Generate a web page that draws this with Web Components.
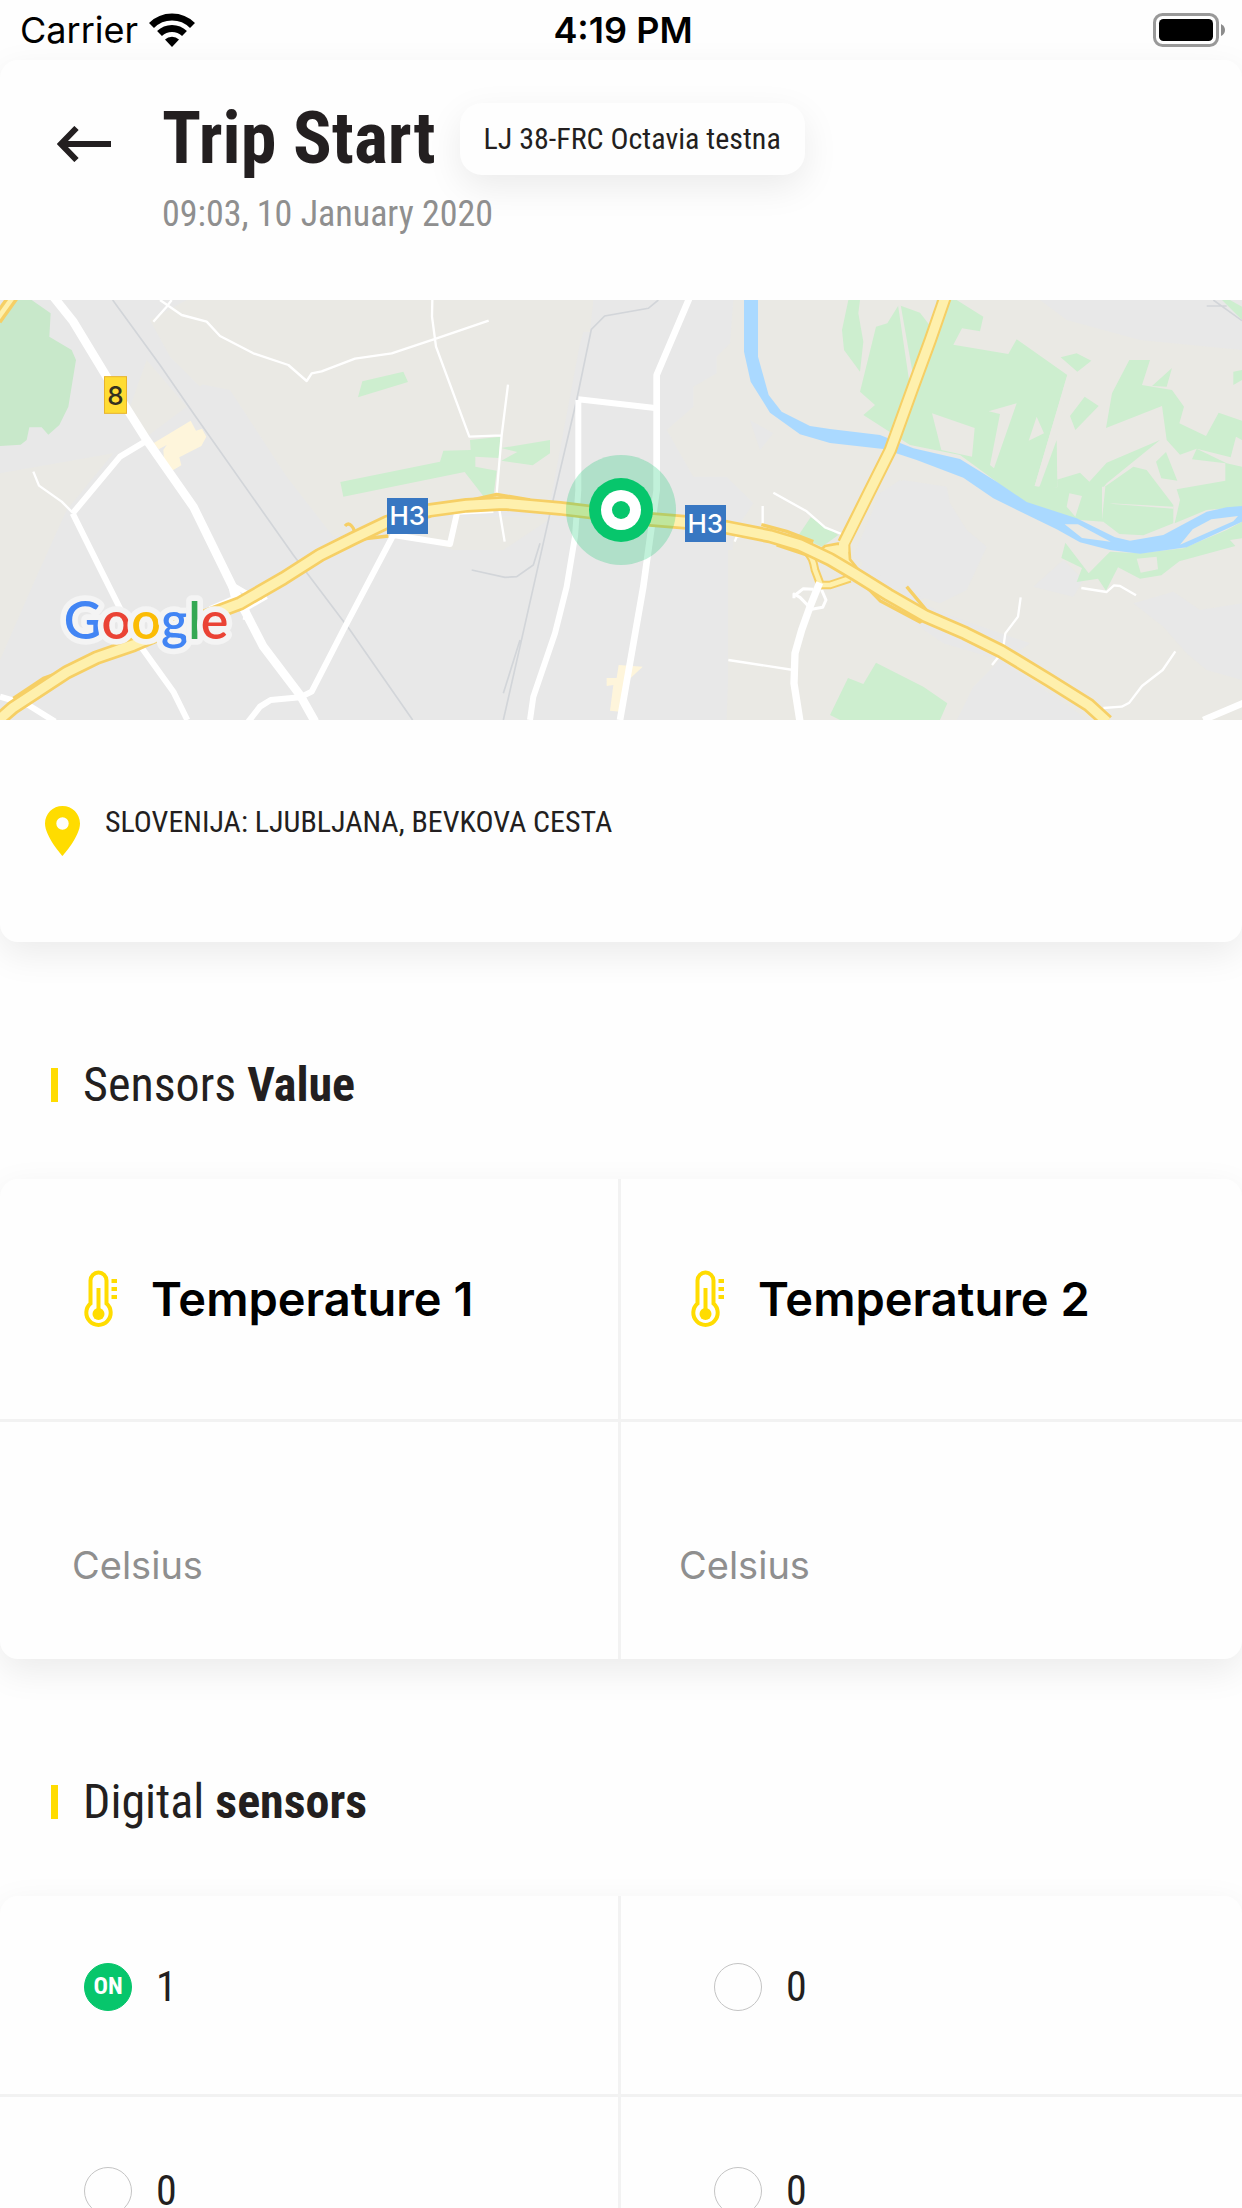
<!DOCTYPE html>
<html lang="en">
<head>
<meta charset="utf-8">
<meta name="viewport" content="width=device-width, initial-scale=1">
<title>Trip Start</title>
<style>
  html, body { margin: 0; background: #fefefe; }
  body {
    --ink: #231f20;
    --muted: #8f8f8f;
    --accent: #ffdc00;
    --ok: #07c66c;
    --line: #f2f2f2;
    --surface: #fefefe;
    --shadow: 0 12px 36px rgba(0, 0, 0, .08);
    --condensed: "Roboto Condensed", "Liberation Sans Narrow", Roboto, sans-serif;
    --system: Inter, "Liberation Sans", sans-serif;
    color: var(--ink);
    font-family: var(--condensed);
    height: 100vh;
    overflow: hidden auto;
    scrollbar-width: none;
  }
</style>
</head>
<body>
<trip-page></trip-page>

<script>
const define = (name, html) => {
  const template = document.createElement('template');
  template.innerHTML = html;
  customElements.define(name, class extends HTMLElement {
    constructor() {
      super();
      this.attachShadow({ mode: 'open' }).append(template.content.cloneNode(true));
    }
  });
};

define('status-bar', `
  <style>
    :host { display: grid; grid-template-columns: 1fr auto 1fr; align-items: center; height: 60px; padding: 0 16px 0 20px; color: #000; font: 400 36px/60px var(--system); }
    .left { display: flex; align-items: center; gap: 11px; }
    .time { font-weight: 600; }
    .battery { justify-self: end; }
    svg { display: block; }
  </style>
  <div class="left"><span>Carrier</span>
    <svg width="46" height="34" viewBox="0 0 46 34" aria-hidden="true">
      <path fill="none" stroke="#000" stroke-width="7" d="M2.5 12.5a29 29 0 0 1 41 0"/>
      <path fill="none" stroke="#000" stroke-width="7" d="M10.5 20.5a18 18 0 0 1 25 0"/>
      <path d="M23 34l-7-7.500a10 10 0 0 1 14 0z"/>
    </svg>
  </div>
  <span class="time">4:19 PM</span>
  <svg class="battery" width="74" height="34" viewBox="0 0 74 34" aria-hidden="true">
    <rect x="2.500" y="1.500" width="63" height="31" rx="8" fill="none" stroke="#999" stroke-width="3"/>
    <rect x="7" y="6" width="54" height="22" rx="4.500"/>
    <path d="M69 11q4 2 4 6t-4 6z" fill="#8c8c8c"/>
  </svg>`);

define('trip-header', `
  <style>
    :host { display: grid; grid-template-columns: 162px 1fr; padding: 37px 0 65px; }
    button { all: unset; align-self: start; padding: 29px 0 0 57px; cursor: pointer; }
    svg { display: block; }
    .row { display: flex; align-items: center; gap: 24px; height: 84px; }
    h1 { margin: 0; font-size: 72px; line-height: 84px; font-weight: 700; white-space: nowrap; }
    .tag { padding: 0 24px; border-radius: 22px; background: var(--surface); box-shadow: var(--shadow); font-size: 30px; line-height: 72px; white-space: nowrap; }
    p { margin: 12px 0 0; font-size: 36px; line-height: 42px; color: var(--muted); }
  </style>
  <button aria-label="Back">
    <svg width="55" height="36" viewBox="0 0 55 36" aria-hidden="true"><path fill="none" stroke="#231f20" stroke-width="6" d="M54 18H5M19.500 2L4 18l15.500 16"/></svg>
  </button>
  <div>
    <div class="row"><h1><slot name="title"></slot></h1><span class="tag"><slot name="vehicle"></slot></span></div>
    <p><slot name="time"></slot></p>
  </div>`);

define('trip-map', `
  <style>
    :host { display: block; height: 420px; overflow: hidden; }
    svg { display: block; width: 100%; height: 100%; }
    .w { fill: none; stroke: #fff; stroke-linejoin: round; }
    .rail { fill: none; stroke: #d2d5d9; stroke-width: 5; }
    .case { fill: none; stroke: #f6cf65; stroke-linejoin: round; }
    .road { fill: none; stroke: #fef0ad; stroke-linejoin: round; }
    .logo { font: 600 156px Lato, sans-serif; paint-order: stroke; stroke: #f4f4f4; stroke-width: 34px; stroke-linejoin: round; }
    .shield { font: 500 78px var(--system); text-anchor: middle; }
  </style>
  <svg viewBox="0 30 3726 1260" preserveAspectRatio="xMidYMid slice" role="img" aria-label="Map of the trip start">
    <rect y="30" width="3726" height="1260" fill="#e8e8e8"/>
    <g fill="#eae9e4">
      <path d="M560 30H1780L1770 125H1600V230L1560 280H1480V130L1490 80L1420 30H1780L1740 160L1650 640L1480 660L1270 660L1000 740L860 560L690 300L590 280L510 200L450 90z"/>
      <path d="M1230 680H1660L1510 780H1360L1270 750zM440 210L560 350L440 440L390 350zM510 200L690 200L600 290zM0 550L340 490L200 660L105 870L0 1110z"/>
      <path d="M2200 30H3120L3200 90L3420 150L3726 180V1290H2870L2920 1190L3000 1125L3090 1060L2830 970L2750 930L2870 900L2950 780L2850 660L2700 570L2640 610L2600 800L2480 1000L2440 1290H2180L2200 730L2260 640L2180 560L2080 560L2000 420L2080 350V290L2150 250V200L2190 160z"/>
    </g>
    <g fill="#e8e8e8">
      <path d="M3400 940L3520 905L3600 960L3726 940V1170L3620 1140L3560 1090L3490 1010zM3100 890L3190 810L3250 870L3220 920z"/>
      <path d="M2640 610L2710 570L2840 590L2850 640L2900 720L2960 770L2900 900L2820 940L2700 900L2560 800z"/>
      <path d="M2870 1290L2920 1190L3000 1110L3266 1290zM2250 390L2320 430L2280 480z"/>
    </g>
    <path fill="#eae9e4" d="M2440 780L2500 890L2570 880L2700 970L2830 1060L3000 1110L2920 1190L2870 1290H2184V780z"/>
    <path fill="#c8e8ca" d="M20 30H95L152 70L148 140L215 180L228 210L205 350L178 405L145 434L125 412H88L80 450L62 464L0 468V90z"/>
    <g fill="#cdeecf">
      <path d="M1087 274L1210 245L1224 276L1074 322zM1021 576L1320 515L1330 482L1412 480L1410 450L1502 440L1496 504L1426 500L1426 530L1490 542L1480 620L1450 618L1394 546L1030 620z"/>
      <path d="M1504 474L1650 450V490L1598 526L1504 512L1552 486z"/>
      <path d="M2394 738L2432 682L2515 735L2466 770z"/>
      <path d="M2545 30H2580L2575 70L2590 155L2580 245L2532 180L2526 120z"/>
      <path d="M2696 45L2760 68L2800 120L2810 30H2870L2950 80L2940 124L2886 115L2860 164L3025 192L3050 148L3202 255L3104 588L3172 592L3168 450V570L3240 548L3268 575L3320 518L3480 450L3320 580L3308 595L3400 530L3440 540L3520 645L3520 700L3430 736L3358 732L3310 695L3240 690L3210 680L3080 650L2990 575L2880 495L2730 465L2590 375L2625 345L2580 305L2628 110L2662 100z"/>
      <path d="M3182 202L3230 190L3274 212L3232 245zM3254 320L3296 348L3226 420L3210 378zM3388 210H3450L3426 285L3516 300L3552 350L3538 400L3618 438L3656 368L3726 392V450L3708 440L3692 502L3590 476L3540 494L3500 450L3486 348L3318 414L3336 310zM3456 288L3516 234L3500 290zM3726 240L3700 245V285L3726 270zM3498 486L3532 572L3484 565L3468 515z"/>
      <path d="M3576 508L3590 476L3680 520L3726 530V650L3620 660L3524 700L3540 630L3530 598L3676 572V520z"/>
      <path d="M3196 758L3266 850L3330 785L3420 790L3550 775L3680 720L3726 695V745L3690 750L3706 768L3538 814L3484 856L3420 866L3354 832L3318 902L3294 866L3230 876L3246 834L3184 804z"/>
      <path d="M2490 1275L2544 1164L2590 1182L2628 1118L2770 1190L2842 1240L2820 1290H2520zM3666 30L3726 90V50L3690 30z"/>
    </g>
    <g fill="#eae9e4">
      <path d="M2796 370L2924 414L2916 500L2824 480zM2966 364L3050 340L2982 535L2970 525L3000 372zM3110 380L3132 430L3086 452zM3208 610L3246 618L3226 680L3200 650zM3410 806L3470 800L3474 838L3422 848z"/>
      <path d="M2694 45L2702 45L2738 250L2730 290zM3168 450L3118 590L3104 588L3202 255L3210 262zM3306 590L3316 590L3306 690zM3330 640L3520 650V656L3340 642z"/>
    </g>
    <path fill="#cdeecf" d="M3118 592L3170 450L3172 592z"/>
    <path fill="#aad9ff" d="M2232 30H2274V200L2306 315L2345 365L2430 408L2490 417L2640 435L2740 475L2880 507L2990 575L3080 636L3230 685L3345 742L3390 752L3490 735L3620 665L3680 652L3726 648V695L3560 772L3420 791L3330 780L3240 757L3170 718L2980 625L2890 563L2750 510L2650 477L2490 459L2400 433L2310 368L2252 275L2232 185z"/>
    <path fill="#eae9e4" d="M3194 703H3234L3332 755L3246 744zM3540 764L3578 718L3634 688L3714 678L3700 694z"/>
    <path fill="#fef5db" d="M460 460L572 392L588 422L606 416L619 440L604 468L538 502L544 526L516 542L492 512L490 480L500 465L476 478zM1856 1125L1928 1130L1880 1175L1860 1265L1830 1262L1840 1185L1820 1188V1164H1850z"/>
    <path class="rail" d="M338 30L480 225L580 370L880 795L1050 1020L1238 1290"/>
    <path class="rail" d="M1975 30L1945 55L1814 78L1774 118L1730 330L1650 670L1560 1070L1510 1290M1415 840L1515 862L1550 860L1600 825L1620 760M1510 1210L1560 1050M3640 30L3726 92M3620 48H3680"/>
    <g class="w">
      <g stroke-width="7"><path d="M480 30L545 75L620 95L660 138L760 190L865 225L920 273L935 250L965 244L1065 206L1175 190L1310 145L1466 92M515 30L500 50L460 95M1297 30L1296 80L1308 170L1408 440L1505 436M1524 284L1505 436L1490 610L1514 755M100 545L117 587L185 635L218 668M2185 1110L2380 1140M3244 894L3320 906L3342 886L3360 888L3408 916M3062 922L3054 980L3016 1030L3008 1085L2976 1125M3526 1084L3488 1140L3426 1188L3388 1238L3365 1250L3310 1254M2320 608L2420 664L2475 712L2525 732M2288 648V710M2204 755L2210 740L2300 730"/></g>
      <path stroke-width="18" d="M218 670L360 500L435 455M218 670L300 835L370 975L430 1080L520 1205L562 1290M0 1220L85 1245L165 1295M745 1295L780 1250L812 1230L900 1222L935 1205L1030 1020L1180 735L1350 762L1372 665L1480 660M1735 330V600L1725 740L1700 890L1665 1030L1600 1220L1590 1290M1735 328L1965 354"/>
      <path stroke-width="26" d="M160 20L220 95L320 260L440 450L580 650L710 915L790 1070L900 1215L945 1295"/>
      <path stroke-width="20" d="M2070 20L1970 255V600L1930 890L1860 1290M3610 1290L3740 1235"/>
      <path stroke-width="9" d="M2382 918L2410 896L2440 898M2465 900L2478 930L2468 952L2435 958L2400 922L2382 912V925"/>
      <path stroke-width="14" d="M630 955L700 925L690 880L750 915L735 990M740 955L800 920"/>
    </g>
    <path class="case" stroke-width="26" d="M2420 785Q2438 798 2445 840L2462 885L2490 885L2550 865"/>
    <path class="road" stroke-width="14" d="M2420 785Q2438 798 2445 840L2462 885L2490 885L2550 865"/>
    <path class="w" stroke-width="22" d="M2459 878L2430 950L2405 1020L2385 1090L2382 1180L2400 1295"/>
    <path class="case" stroke-width="10" d="M40 1225L130 1165L200 1140M780 925L850 870M1040 740Q1075 730 1055 708Q1045 696 1035 708M1060 750L1165 738M1370 640L1490 613L1590 630M2284 704L2360 724L2440 755M2330 765L2420 795M2580 870L2640 932L2760 996L2775 985M2720 890L2780 962"/>
    <path class="case" stroke-width="40" d="M2836 20L2791 150L2736 300L2671 480L2606 610L2531 760"/>
    <path fill="#fef0ad" stroke="#f6cf65" stroke-width="8" stroke-linejoin="round" d="M2514 761L2475 768L2455 785L2600 870L2550 808L2547 765z"/>
    <path class="case" stroke-width="44" d="M-10 1295L40 1252L200 1147L290 1103L400 1065L500 1022L600 985L720 940L850 865L960 795L1060 745L1160 697L1290 661L1400 646L1510 640L1680 655L1950 688L2060 697L2180 712L2310 738L2400 765L2490 808L2566 853L2666 915L2776 978L2896 1030L3006 1085L3146 1170L3266 1245L3321 1295"/>
    <path class="road" stroke-width="28" d="M2836 20L2791 150L2736 300L2671 480L2606 610L2531 762V785"/>
    <path class="road" stroke-width="28" d="M-10 1295L40 1252L200 1147L290 1103L400 1065L500 1022L600 985L720 940L850 865L960 795L1060 745L1160 697L1290 661L1400 646L1510 640L1680 655L1950 688L2060 697L2180 712L2310 738L2400 765L2490 808L2566 853L2666 915L2776 978L2896 1030L3006 1085L3146 1170L3266 1245L3321 1295"/>
    <path class="case" stroke-width="34" d="M-10 90L40 20"/>
    <path class="road" stroke-width="14" d="M-10 90L40 20"/>
    <rect x="313.500" y="260" width="66" height="110" fill="#ffdc33" stroke="#e8b32c" stroke-width="3"/>
    <text class="shield" x="346" y="344" fill="#333020">8</text>
    <rect x="1161" y="624" width="123" height="108" fill="#3877c2"/>
    <text class="shield" x="1222" y="706" fill="#fff">H3</text>
    <rect x="2055" y="645" width="123" height="111" fill="#3877c2"/>
    <text class="shield" x="2116" y="729" fill="#fff">H3</text>
    <text class="logo" x="191" y="1048"><tspan fill="#4285f4">G</tspan><tspan fill="#ea4335">o</tspan><tspan fill="#fbbc05">o</tspan><tspan fill="#4285f4">g</tspan><tspan fill="#34a853">l</tspan><tspan fill="#ea4335">e</tspan></text>
    <circle cx="1863" cy="660" r="165" fill="#07c66c" fill-opacity=".25"/>
    <circle cx="1863" cy="660" r="96" fill="#07c66c"/>
    <circle cx="1863" cy="660" r="60" fill="#fff"/>
    <circle cx="1863" cy="660" r="27" fill="#07c66c"/>
  </svg>`);

define('trip-address', `
  <style>
    :host { display: flex; align-items: flex-start; gap: 25px; padding: 84px 45px 84px; font-size: 30px; line-height: 36px; }
    svg { display: block; flex: none; margin: 2px 0; }
  </style>
  <svg width="35" height="50" viewBox="0 0 35 50" aria-hidden="true"><path fill="#ffdc00" fill-rule="evenodd" d="M17.500 0C7.800 0 0 7.800 0 17.500C0 30.600 17.500 50 17.500 50S35 30.600 35 17.500C35 7.800 27.200 0 17.500 0zm0 23.700a6.200 6.200 0 1 1 0-12.400a6.200 6.200 0 0 1 0 12.400z"/></svg>
  <span><slot></slot></span>`);

define('section-title', `
  <style>
    :host { display: block; padding: 115px 51px 66px; }
    h2 { display: flex; align-items: center; gap: 25px; margin: 0; font-size: 48px; line-height: 56px; font-weight: 400; }
    h2::before { content: ""; width: 7px; height: 34px; background: var(--accent); }
    ::slotted(b) { font-weight: 700; }
  </style>
  <h2><span><slot></slot></span></h2>`);

define('panel-card', `
  <style>
    :host { display: block; border-radius: 18px; background: var(--surface); box-shadow: var(--shadow); }
  </style>
  <slot></slot>`);

define('split-grid', `
  <style>
    :host { display: grid; grid-template-columns: 1fr 1fr; }
    ::slotted(:nth-child(odd)) { border-right: 3px solid var(--line); }
  </style>
  <slot></slot>`);

define('temperature-sensor', `
  <style>
    :host { display: block; font-family: var(--system); --inset: 72px; }
    :host(:nth-child(even)) { --inset: 58px; }
    .name { display: flex; align-items: center; gap: 33px; box-sizing: border-box; height: 243px; padding: 0 0 0 calc(var(--inset) + 12px); border-bottom: 3px solid var(--line); }
    h3 { margin: 0; font-size: 47px; line-height: 58px; font-weight: 600; color: #000; }
    svg { display: block; }
    .unit { display: flex; align-items: flex-end; box-sizing: border-box; height: 237px; padding: 0 0 70px var(--inset); font-size: 38px; line-height: 48px; color: var(--muted); }
  </style>
  <div class="name">
    <svg width="34" height="58" viewBox="0 0 34 58" aria-hidden="true">
      <path fill="none" stroke="#ffdc00" stroke-width="4" d="M6.500 33.500V10.500a8 8 0 0 1 16 0V33.500a12.200 12.200 0 1 1-16 0z"/>
      <circle cx="14.500" cy="44" r="6" fill="#ffdc00"/>
      <path stroke="#ffdc00" stroke-width="4" d="M14.500 18V44M27.500 11H33M27.500 19H33M27.500 27H33"/>
    </svg>
    <h3><slot></slot></h3>
  </div>
  <div class="unit"><slot name="unit"></slot></div>`);

define('digital-sensor', `
  <style>
    :host { display: flex; align-items: center; gap: 24px; box-sizing: border-box; height: 201px; padding: 0 0 16px 84px; border-bottom: 3px solid var(--line); font-size: 42px; line-height: 48px; }
    :host(:nth-child(even)) { padding-left: 93px; }
    :host(:nth-child(n + 3)) { height: 204px; padding-bottom: 14px; }
    .state { box-sizing: border-box; width: 48px; height: 48px; border: 1px solid #c4c4c4; border-radius: 50%; font-size: 24px; line-height: 44px; font-weight: 700; text-align: center; color: #fff; }
    :host([on]) .state { border-color: var(--ok); background: var(--ok); }
  </style>
  <span class="state"><slot name="state"></slot></span><span><slot></slot></span>`);

define('trip-page', `
  <style>:host { display: block; }</style>
  <status-bar></status-bar>
  <main>
    <panel-card>
      <trip-header>
        <span slot="title">Trip Start</span>
        <span slot="vehicle">LJ 38-FRC Octavia testna</span>
        <span slot="time">09:03, 10 January 2020</span>
      </trip-header>
      <trip-map></trip-map>
      <trip-address>SLOVENIJA: LJUBLJANA, BEVKOVA CESTA</trip-address>
    </panel-card>
    <section-title>Sensors <b>Value</b></section-title>
    <panel-card>
      <split-grid>
        <temperature-sensor>Temperature 1<span slot="unit">Celsius</span></temperature-sensor>
        <temperature-sensor>Temperature 2<span slot="unit">Celsius</span></temperature-sensor>
      </split-grid>
    </panel-card>
    <section-title>Digital <b>sensors</b></section-title>
    <panel-card>
      <split-grid>
        <digital-sensor on><span slot="state">ON</span>1</digital-sensor>
        <digital-sensor>0</digital-sensor>
        <digital-sensor>0</digital-sensor>
        <digital-sensor>0</digital-sensor>
      </split-grid>
    </panel-card>
  </main>`);
</script>
</body>
</html>
